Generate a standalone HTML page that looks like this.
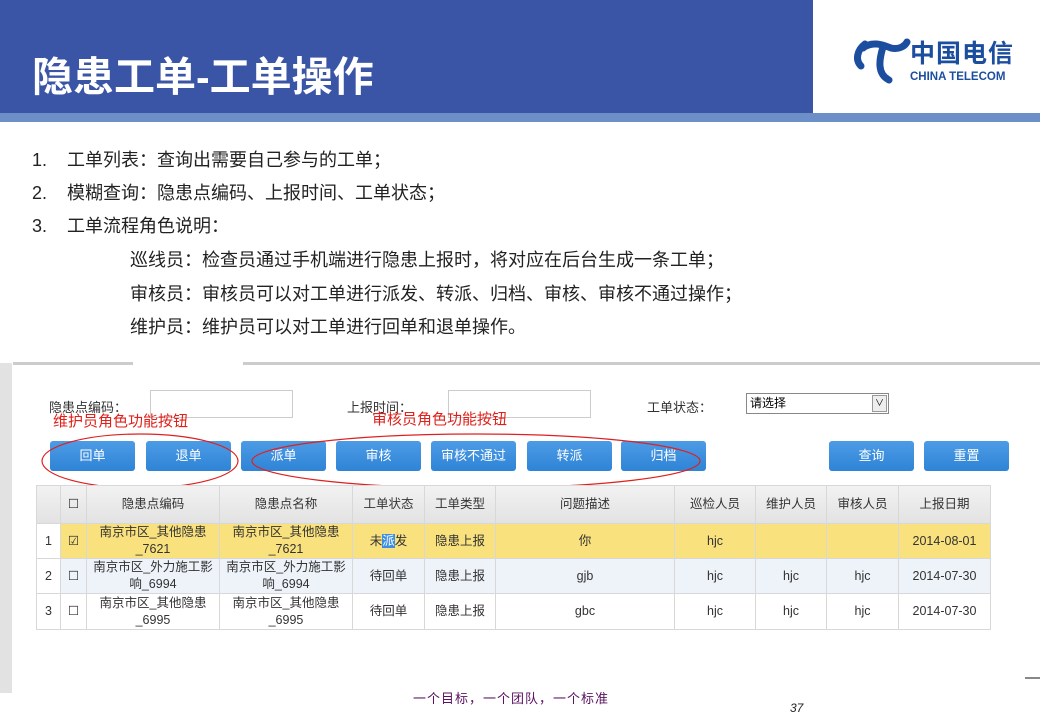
<!DOCTYPE html>
<html><head><meta charset="utf-8"><style>
*{margin:0;padding:0;box-sizing:border-box}
body{width:1040px;height:720px;background:#fff;position:relative;overflow:hidden;font-family:"Liberation Sans","Noto Sans CJK SC",sans-serif}
.a{position:absolute}
.hdr{left:0;top:0;width:813px;height:113px;background:#3a55a6}
.title{left:32px;top:43px;color:#fff;font-size:41px;font-weight:bold;letter-spacing:0px;white-space:nowrap}
.logo{left:813px;top:0;width:227px;height:113px;background:#fff}
.strip{left:0;top:113px;width:1040px;height:9px;background:#6d8fc8}
.li{font-size:18px;color:#222;white-space:nowrap}
.btn{height:30px;width:85px;top:441px;background:linear-gradient(#4c9be6,#2f84d6);color:#fff;font-size:13px;text-align:center;line-height:30px;border-radius:3px}
.lbl{font-size:13px;color:#333;top:397px}
.inp{border:1px solid #ccc;background:#fff}
table{position:absolute;left:36px;top:485px;width:954px;border-collapse:collapse;font-size:12.5px;color:#333;table-layout:fixed}
td{border:1px solid #d8d8d8;text-align:center;line-height:17px;padding:0}
.red{color:#e0201a;font-size:15px;top:410px}
</style></head><body>
<div class="a hdr"></div>
<div class="a title">隐患工单-工单操作</div>
<div class="a logo">
<svg width="227" height="113" style="position:absolute;left:0;top:0">
<path d="M52 44 C44 50,42 60,48 66" fill="none" stroke="#1c4e9f" stroke-width="7" stroke-linecap="round"/>
<path d="M50 48 C60 40,72 46,78 48 C86 50,92 46,94 42" fill="none" stroke="#1c4e9f" stroke-width="7" stroke-linecap="round"/>
<path d="M70 47 C66 60,64 74,76 80" fill="none" stroke="#1c4e9f" stroke-width="7" stroke-linecap="round"/>
<text x="97" y="62" font-family="Noto Sans CJK SC,sans-serif" font-size="25" font-weight="bold" fill="#1c4e9f" letter-spacing="1">中国电信</text>
<text x="97" y="80" font-family="Liberation Sans,sans-serif" font-size="11.5" font-weight="bold" fill="#1c4e9f">CHINA TELECOM</text>
</svg></div>
<div class="a strip"></div>

<div class="a li" style="left:32px;top:146px">1.&nbsp;&nbsp;&nbsp;&nbsp;工单列表：查询出需要自己参与的工单；</div>
<div class="a li" style="left:32px;top:179px">2.&nbsp;&nbsp;&nbsp;&nbsp;模糊查询：隐患点编码、上报时间、工单状态；</div>
<div class="a li" style="left:32px;top:212px">3.&nbsp;&nbsp;&nbsp;&nbsp;工单流程角色说明：</div>
<div class="a li" style="left:130px;top:246px">巡线员：检查员通过手机端进行隐患上报时，将对应在后台生成一条工单；</div>
<div class="a li" style="left:130px;top:280px">审核员：审核员可以对工单进行派发、转派、归档、审核、审核不通过操作；</div>
<div class="a li" style="left:130px;top:313px">维护员：维护员可以对工单进行回单和退单操作。</div>

<div class="a" style="left:0;top:363px;width:12px;height:330px;background:#e2e2e2"></div>
<div class="a" style="left:13px;top:362px;width:120px;height:3px;background:#ccc"></div>
<div class="a" style="left:243px;top:362px;width:797px;height:3px;background:#ccc"></div>

<div class="a lbl" style="left:49px">隐患点编码：</div>
<div class="a inp" style="left:150px;top:390px;width:143px;height:28px"></div>
<div class="a lbl" style="left:347px">上报时间：</div>
<div class="a inp" style="left:448px;top:390px;width:143px;height:28px"></div>
<div class="a lbl" style="left:647px">工单状态：</div>
<div class="a inp" style="left:746px;top:393px;width:143px;height:21px;border-color:#888;font-size:12px;line-height:19px;padding-left:3px">请选择<span style="position:absolute;right:1px;top:1px;width:15px;height:17px;border:1px solid #999;background:#eee;font-size:9px;line-height:15px;text-align:center">∨</span></div>
<div class="a red" style="left:53px">维护员角色功能按钮</div>
<div class="a red" style="left:372px;top:408px">审核员角色功能按钮</div>

<div class="a btn" style="left:50px">回单</div>
<div class="a btn" style="left:146px">退单</div>
<div class="a btn" style="left:241px">派单</div>
<div class="a btn" style="left:336px">审核</div>
<div class="a btn" style="left:431px">审核不通过</div>
<div class="a btn" style="left:527px">转派</div>
<div class="a btn" style="left:621px">归档</div>
<div class="a btn" style="left:829px">查询</div>
<div class="a btn" style="left:924px">重置</div>
<svg class="a" style="left:0;top:0" width="1040" height="720">
<ellipse cx="140" cy="461" rx="98" ry="27" fill="none" stroke="#e02020" stroke-width="1.2"/>
<ellipse cx="476" cy="461" rx="224" ry="27" fill="none" stroke="#e02020" stroke-width="1.2"/>
</svg>

<table>
<colgroup><col style="width:24px"><col style="width:26px"><col style="width:133px"><col style="width:133px"><col style="width:72px"><col style="width:71px"><col style="width:179px"><col style="width:81px"><col style="width:71px"><col style="width:72px"><col style="width:92px"></colgroup>
<tr style="height:38px;background:linear-gradient(#f2f2f2,#e2e2e2)"><td></td><td>☐</td><td>隐患点编码</td><td>隐患点名称</td><td>工单状态</td><td>工单类型</td><td>问题描述</td><td>巡检人员</td><td>维护人员</td><td>审核人员</td><td>上报日期</td></tr>
<tr style="height:35px;background:#f9e27e"><td style="background:#fff">1</td><td>☑</td><td>南京市区_其他隐患<br>_7621</td><td>南京市区_其他隐患<br>_7621</td><td>未<span style="background:#3b8ee0;color:#fff">派</span>发</td><td>隐患上报</td><td>你</td><td>hjc</td><td></td><td></td><td>2014-08-01</td></tr>
<tr style="height:35px;background:#eef3fa"><td style="background:#fff">2</td><td>☐</td><td>南京市区_外力施工影<br>响_6994</td><td>南京市区_外力施工影<br>响_6994</td><td>待回单</td><td>隐患上报</td><td>gjb</td><td>hjc</td><td>hjc</td><td>hjc</td><td>2014-07-30</td></tr>
<tr style="height:36px"><td>3</td><td>☐</td><td>南京市区_其他隐患<br>_6995</td><td>南京市区_其他隐患<br>_6995</td><td>待回单</td><td>隐患上报</td><td>gbc</td><td>hjc</td><td>hjc</td><td>hjc</td><td>2014-07-30</td></tr>
</table>

<div class="a" style="left:413px;top:688px;font-size:13px;color:#5a1060;letter-spacing:1px">一个目标，一个团队，一个标准</div>
<div class="a" style="left:790px;top:701px;font-size:12px;font-style:italic;color:#222">37</div>
<div class="a" style="left:1025px;top:677px;width:15px;height:2px;background:#888"></div>
</body></html>
